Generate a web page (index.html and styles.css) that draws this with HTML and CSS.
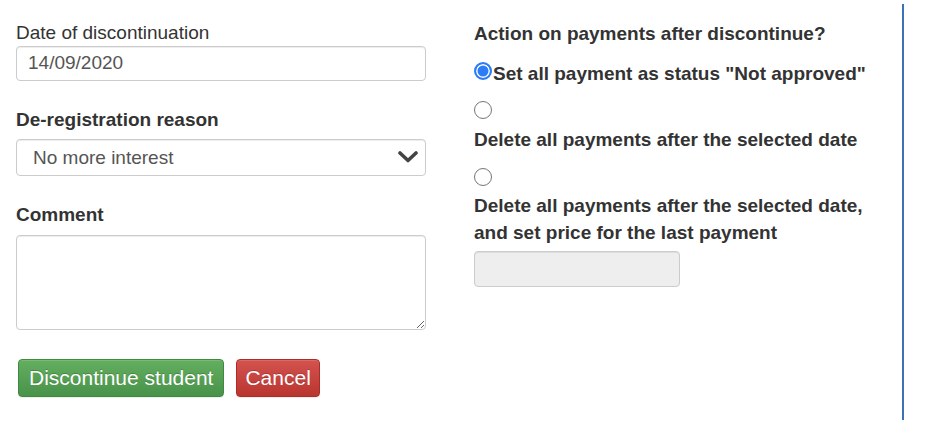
FILE: index.html
```html
<!DOCTYPE html>
<html>
<head>
  <title>Discontinue student</title>
  <link rel="stylesheet" href="styles.css">
</head>
<body>
  <div class="modal-body">
    <div class="col col-left">
      <div class="form-group">
        <label class="plain" for="date">Date of discontinuation</label>
        <input type="text" id="date" class="form-control" value="14/09/2020">
      </div>

      <div class="form-group">
        <label for="reason">De-registration reason</label>
        <div class="select-wrap">
          <select id="reason" class="form-control">
            <option>No more interest</option>
          </select>
          <svg class="chevron" width="20" height="12" viewBox="0 0 20 12">
            <path d="M2 2 L10 9.5 L18 2" fill="none" stroke="#444" stroke-width="3.6" stroke-linecap="round" stroke-linejoin="round"/>
          </svg>
        </div>
      </div>

      <div class="form-group">
        <label for="comment">Comment</label>
        <textarea id="comment" class="form-control"></textarea>
      </div>

      <div class="actions">
        <button class="btn btn-success">Discontinue student</button>
        <button class="btn btn-danger">Cancel</button>
      </div>
    </div>

    <div class="col col-right">
      <div class="group-title">Action on payments after discontinue?</div>

      <label class="choice">
        <input type="radio" name="action" checked><span>Set all payment as status "Not approved"</span>
      </label>
      <label class="choice">
        <input type="radio" name="action"> <span>Delete all payments after the selected date</span>
      </label>
      <label class="choice">
        <input type="radio" name="action"> <span>Delete all payments after the selected date, and set price for the last payment</span>
      </label>

      <input type="text" class="form-control price" disabled>
    </div>
  </div>
</body>
</html>
```

FILE: styles.css
```css
body {
  margin: 0;
  font-family: "Liberation Sans", Arial, sans-serif;
  font-size: 19px;
  line-height: 26.67px;
  color: #333;
  background: #fff;
}

.modal-body {
  display: flex;
  width: 902px;
  height: 401px;
  margin-top: 4px;
  padding-top: 15px;
  box-sizing: content-box;
  border-right: 2px solid #3b73b7;
}

.col-left {
  width: 410px;
  margin-left: 16px;
}

.col-right {
  width: 406px;
  margin-left: 48px;
  padding-top: 2px;
}

.form-group {
  margin-bottom: 24px;
}

label {
  display: block;
  padding-top: 2px;
  margin-bottom: 6px;
  font-weight: bold;
}

label.plain {
  font-weight: normal;
  line-height: 24.67px;
  margin-bottom: 0;
}

.form-control {
  display: block;
  width: 100%;
  box-sizing: border-box;
  font-family: inherit;
  font-size: 19px;
  color: #555;
  background: #fff;
  border: 1px solid #ccc;
  border-radius: 4px;
  box-shadow: inset 0 1px 1px rgba(0,0,0,.075);
  margin: 0;
}

input.form-control {
  height: 35px;
  padding: 0 11px;
}

.select-wrap {
  position: relative;
}

select.form-control {
  height: 37px;
  padding: 0 16px;
  appearance: none;
  -webkit-appearance: none;
}

.chevron {
  position: absolute;
  right: 8px;
  top: 12px;
  pointer-events: none;
}

textarea.form-control {
  height: 95px;
  padding: 6px 11px;
  resize: vertical;
}

.form-group:nth-child(3) {
  margin-bottom: 29px;
}

.actions {
  display: flex;
  gap: 12px;
  padding-left: 2px;
}

.btn {
  font-family: inherit;
  font-size: 21px;
  line-height: 24px;
  padding: 6px 10px;
  color: #fff;
  border-radius: 4px;
  border: 1px solid transparent;
  text-shadow: 0 -1px 0 rgba(0,0,0,.2);
  box-shadow: inset 0 1px 0 rgba(255,255,255,.15), 0 1px 1px rgba(0,0,0,.075);
  cursor: pointer;
}

.btn-success {
  background-image: linear-gradient(to bottom, #63ae5f 0, #48934a 100%);
  border-color: #3e8a3e;
}

.btn-danger {
  padding: 6px 8px;
  background-image: linear-gradient(to bottom, #d4534e 0, #b93530 100%);
  border-color: #ad2c28;
}

.group-title {
  font-weight: bold;
}

.choice {
  padding-top: 0;
  margin: 13px 0 0;
}

.choice span {
  display: inline-block;
}

.choice input {
  appearance: none;
  -webkit-appearance: none;
  width: 18px;
  height: 18px;
  margin: 0 1px 0 0;
  border: 1.5px solid #767676;
  border-radius: 50%;
  background: #fff;
  box-sizing: border-box;
}

.choice input:checked {
  border: 2px solid #2b7cf6;
  background: #2b7cf6;
  box-shadow: inset 0 0 0 1.5px #fff;
}

.price {
  width: 206px;
  height: 36px !important;
  margin-top: 4px;
  background: #eee;
}
```
